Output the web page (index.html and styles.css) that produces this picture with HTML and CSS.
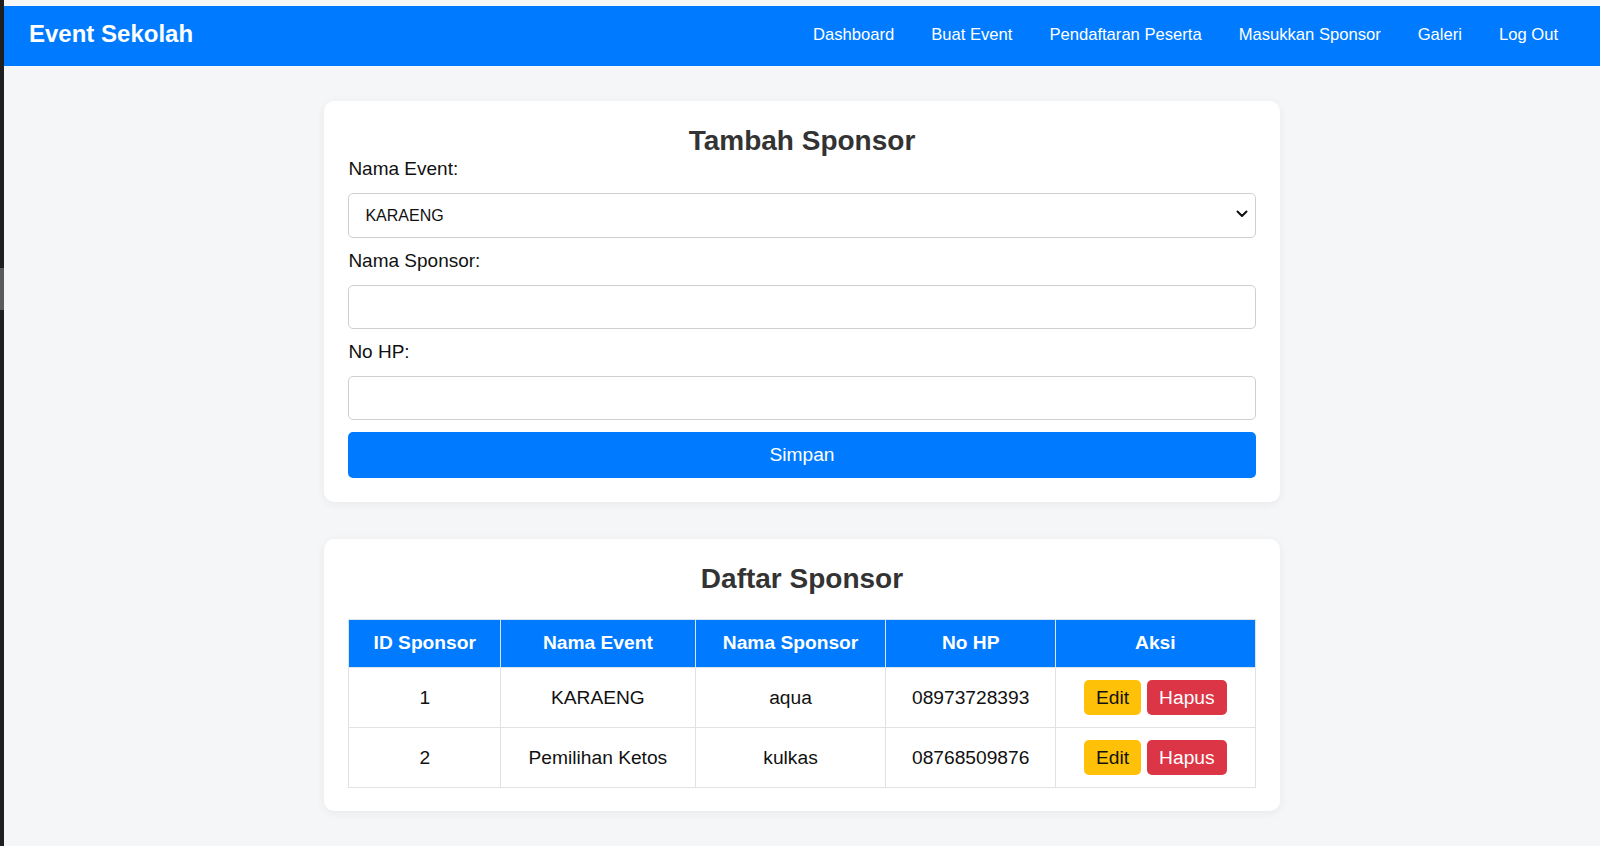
FILE: index.html
```html
<!DOCTYPE html>
<html lang="id">
<head>
<meta charset="utf-8">
<title>Masukkan Sponsor - Event Sekolah</title>
<link rel="stylesheet" href="styles.css">
</head>
<body>
<div class="frame">
  <div class="edge"><div class="edge-thumb"></div></div>
  <div class="page">
    <nav class="navbar">
      <div class="brand">Event Sekolah</div>
      <ul class="nav-links">
        <li><a href="#">Dashboard</a></li>
        <li><a href="#">Buat Event</a></li>
        <li><a href="#">Pendaftaran Peserta</a></li>
        <li><a href="#">Masukkan Sponsor</a></li>
        <li><a href="#">Galeri</a></li>
        <li><a href="#">Log Out</a></li>
      </ul>
    </nav>

    <main class="content">
      <section class="card">
        <h2 class="card-title">Tambah Sponsor</h2>
        <form class="form">
          <label class="form-label" for="event">Nama Event:</label>
          <div class="select-wrap">
            <select id="event" class="form-control select">
              <option>KARAENG</option>
              <option>Pemilihan Ketos</option>
            </select>
            <svg class="chevron" width="12" height="8" viewBox="0 0 12 8"><path d="M1.5 1.5 L6 6 L10.5 1.5" fill="none" stroke="#111" stroke-width="2" stroke-linecap="round" stroke-linejoin="round"/></svg>
          </div>
          <label class="form-label" for="sponsor">Nama Sponsor:</label>
          <input id="sponsor" class="form-control" type="text">
          <label class="form-label" for="hp">No HP:</label>
          <input id="hp" class="form-control" type="text">
          <button type="button" class="btn-primary">Simpan</button>
        </form>
      </section>

      <section class="card card-table">
        <h2 class="card-title table-title">Daftar Sponsor</h2>
        <table class="table">
          <colgroup>
            <col class="c-id"><col class="c-event"><col class="c-sponsor"><col class="c-hp"><col class="c-aksi">
          </colgroup>
          <thead>
            <tr><th>ID Sponsor</th><th>Nama Event</th><th>Nama Sponsor</th><th>No HP</th><th>Aksi</th></tr>
          </thead>
          <tbody>
            <tr>
              <td>1</td><td>KARAENG</td><td>aqua</td><td>08973728393</td>
              <td><span class="actions"><a href="#" class="btn btn-edit">Edit</a><a href="#" class="btn btn-delete">Hapus</a></span></td>
            </tr>
            <tr>
              <td>2</td><td>Pemilihan Ketos</td><td>kulkas</td><td>08768509876</td>
              <td><span class="actions"><a href="#" class="btn btn-edit">Edit</a><a href="#" class="btn btn-delete">Hapus</a></span></td>
            </tr>
          </tbody>
        </table>
      </section>
    </main>
  </div>
</div>
</body>
</html>
```

FILE: styles.css
```css
* { box-sizing: border-box; }

html, body {
  margin: 0;
  padding: 0;
  height: 100%;
}

body {
  font-family: "Liberation Sans", Arial, sans-serif;
  background: #f5f6f8;
  color: #111;
}

.frame {
  display: flex;
  min-height: 846px;
}

.edge {
  width: 4px;
  flex: 0 0 4px;
  background: #1f1f1f;
  padding-top: 268px;
}

.edge-thumb {
  height: 42px;
  background: #5a5a5a;
}

.page {
  flex: 1;
  border-top: 6px solid #f7f7f7;
  background: #f5f6f8;
}

.navbar {
  display: flex;
  align-items: center;
  justify-content: space-between;
  background: #007bff;
  height: 60px;
  padding: 0 42px 5px 25px;
}

.brand {
  color: #fff;
  font-size: 24px;
  font-weight: bold;
  line-height: 28px;
}

.nav-links {
  display: flex;
  gap: 37px;
  list-style: none;
  margin: 0;
  padding: 0;
}

.nav-links a {
  color: #fff;
  text-decoration: none;
  font-size: 16.6px;
  line-height: 22px;
  display: block;
  padding-top: 3px;
}

.content {
  padding: 35px 0 0;
}

.card {
  width: 59.85%;
  margin: 0 auto 37px;
  background: #fff;
  border-radius: 10px;
  box-shadow: 0 2px 10px rgba(0, 0, 0, 0.06);
  padding: 23px 24px 24px;
}

.card-table {
  padding-bottom: 23px;
}

.card-title {
  margin: 0;
  text-align: center;
  font-size: 28px;
  line-height: 33px;
  color: #333;
  font-weight: bold;
}

.table-title {
  margin-bottom: 24px;
}

.form {
  display: flex;
  flex-direction: column;
}

.form-label {
  display: block;
  font-size: 19px;
  line-height: 22px;
  color: #111;
  margin: 1px 0 13px;
}

.form-control {
  display: block;
  width: 100%;
  height: 44px;
  border: 1px solid #cfcfcf;
  border-radius: 5px;
  background: #fff;
  font-family: "Liberation Sans", Arial, sans-serif;
  font-size: 16px;
  color: #111;
  padding: 0 16px;
  margin: 0 0 11px;
}

.select-wrap {
  position: relative;
}

.select {
  appearance: none;
  -webkit-appearance: none;
  height: 45px;
}

.chevron {
  position: absolute;
  right: 8px;
  top: 17px;
  pointer-events: none;
}

.btn-primary {
  display: block;
  width: 100%;
  height: 46px;
  margin-top: 1px;
  border: none;
  border-radius: 5px;
  background: #007bff;
  color: #fff;
  font-family: "Liberation Sans", Arial, sans-serif;
  font-size: 19.2px;
}

.table {
  width: 100%;
  table-layout: fixed;
  border-collapse: collapse;
  font-size: 19.2px;
}

.c-id { width: 16.74%; }
.c-event { width: 21.48%; }
.c-sponsor { width: 21.04%; }
.c-hp { width: 18.72%; }
.c-aksi { width: 22.02%; }

.table th {
  background: #007bff;
  color: #fff;
  font-weight: bold;
  line-height: 22px;
  padding: 12px 8px 13px;
  border: 1px solid #dde3ea;
  text-align: center;
}

.table td {
  line-height: 22px;
  padding: 12px 8px;
  border: 1px solid #e2e2e2;
  text-align: center;
  vertical-align: middle;
  color: #111;
}

.actions {
  display: inline-flex;
  gap: 6px;
  vertical-align: middle;
}

.btn {
  display: inline-block;
  height: 35px;
  line-height: 23px;
  padding: 6px 12px;
  border-radius: 5px;
  text-decoration: none;
  font-size: 19.2px;
}

.btn-edit {
  background: #ffc107;
  color: #111;
}

.btn-delete {
  background: #dc3545;
  color: #fff;
}
```
